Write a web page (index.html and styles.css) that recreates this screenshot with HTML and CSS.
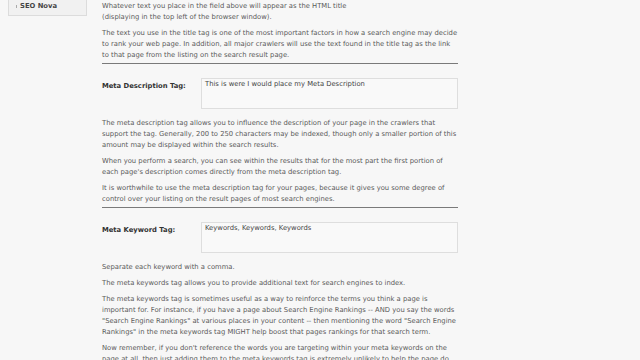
FILE: index.html
```html
<!DOCTYPE html>
<html lang="en">
<head>
    <meta charset="UTF-8">
    <title>SEO Nova - Meta Tags</title>
    <link rel="stylesheet" href="styles.css">
</head>
<body>
    <div class="page">
        <div class="sidebar">
            <div class="side-box">
                <span class="side-mark"></span>SEO Nova
            </div>
        </div>

        <div class="main">
            <p>Whatever text you place in the field above will appear as the HTML title<br>(displaying in the top left of the browser window).</p>
            <p>The text you use in the title tag is one of the most important factors in how a search engine may decide to rank your web page. In addition, all major crawlers will use the text found in the title tag as the link to that page from the listing on the search result page.</p>

            <hr class="rule">

            <div class="field">
                <label class="field-label">Meta Description Tag:</label>
                <div class="field-box">This is were I would place my Meta Description</div>
            </div>

            <p>The meta description tag allows you to influence the description of your page in the crawlers that support the tag. Generally, 200 to 250 characters may be indexed, though only a smaller portion of this amount may be displayed within the search results.</p>
            <p>When you perform a search, you can see within the results that for the most part the first portion of each page's description comes directly from the meta description tag.</p>
            <p>It is worthwhile to use the meta description tag for your pages, because it gives you some degree of control over your listing on the result pages of most search engines.</p>

            <hr class="rule">

            <div class="field">
                <label class="field-label">Meta Keyword Tag:</label>
                <div class="field-box">Keywords, Keywords, Keywords</div>
            </div>

            <p>Separate each keyword with a comma.</p>
            <p>The meta keywords tag allows you to provide additional text for search engines to index.</p>
            <p>The meta keywords tag is sometimes useful as a way to reinforce the terms you think a page is important for. For instance, if you have a page about Search Engine Rankings -- AND you say the words "Search Engine Rankings" at various places in your content -- then mentioning the word "Search Engine Rankings" in the meta keywords tag MIGHT help boost that pages rankings for that search term.</p>
            <p>Now remember, if you don't reference the words you are targeting within your meta keywords on the page at all, then just adding them to the meta keywords tag is extremely unlikely to help the page do well.</p>
        </div>
    </div>
</body>
</html>
```

FILE: styles.css
```css
body {
    margin: 0;
    background-color: #f7f7f7;
    font-family: "DejaVu Sans", Verdana, sans-serif;
    font-size: 6.8px;
    line-height: 11px;
    color: #5a5a5a;
    overflow: hidden;
}

.page {
    display: flex;
    align-items: flex-start;
}

.sidebar {
    width: 79px;
    margin-left: 8px;
}

.side-box {
    height: 15px;
    line-height: 13px;
    padding-left: 7px;
    border: 1px solid #dcdcdc;
    border-top: none;
    background-color: #f1f1f1;
    font-weight: bold;
    color: #444;
}

.side-mark {
    display: inline-block;
    width: 1px;
    height: 3px;
    margin-right: 3px;
    background-color: #aaa;
    vertical-align: middle;
}

.main {
    width: 356px;
    margin-left: 15px;
    padding-top: 1px;
}

.main p {
    margin: 0 0 5px 0;
}

.rule {
    margin: -3px 0 14px 0;
    border: none;
    border-top: 1px solid #7a7a7a;
}

.field {
    display: flex;
    align-items: flex-start;
    margin-bottom: 9px;
}

.field-label {
    width: 99px;
    padding-top: 3px;
    font-weight: bold;
    color: #333;
}

.field-box {
    flex: 1;
    height: 29px;
    padding: 0 3px;
    border: 1px solid #dedede;
    background-color: #f9f9f9;
    color: #444;
}
```
